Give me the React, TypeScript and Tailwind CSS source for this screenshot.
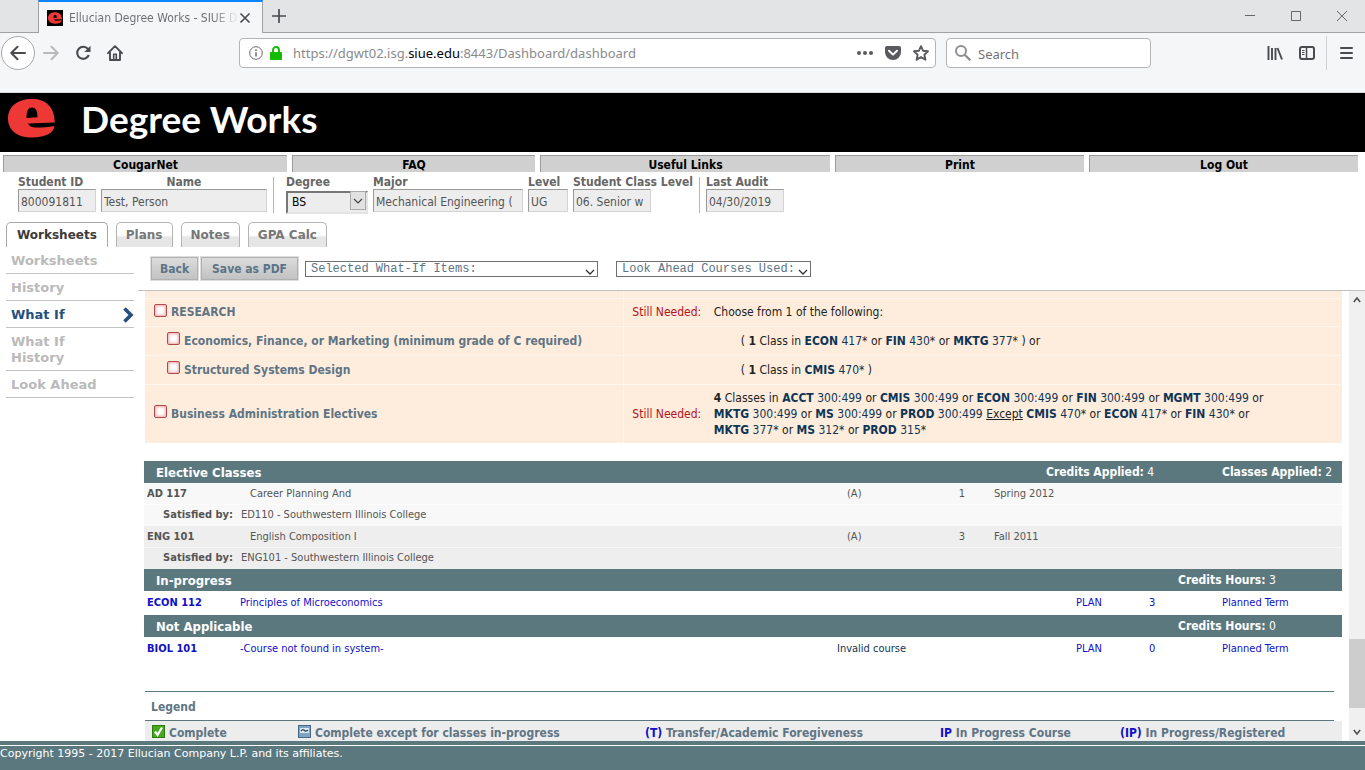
import React from "react";

const COND = "font-['DejaVu_Sans_Condensed','DejaVu_Sans',sans-serif]";
const WIDE = "font-['DejaVu_Sans',sans-serif]";

function LogoMark({ className }: { className: string }) {
  return (
    <svg viewBox="0 0 47 39" className={className} aria-hidden="true">
      <path
        fillRule="evenodd"
        fill="#ee3835"
        d="M24 0C38 0 46.500 8 46.800 23.500L20 24.500C21 27 24 28.600 28 28.600C34 28.600 40 28 46.500 27C46 33.500 38 38.500 24 38.500C9 38.500 0 31 0 19.500C0 8 9 0 24 0ZM18.500 19L29.500 18.300C29.500 12 28 8.500 24 8.500C20 8.500 18.500 12 18.500 19Z"
      />
    </svg>
  );
}

function TabStrip() {
  return (
    <div className="flex h-[33px] shrink-0 items-stretch bg-[#e3e4e6]">
      <div className="w-[38px] border-b border-[#a0a1a3]" />
      <div className="flex w-[225px] items-center border-x border-t-2 border-x-[#a0a1a3] border-t-[#0a84ff] bg-[#f5f6f7] pl-2">
        <span className="flex h-4 w-4 items-center justify-center bg-black">
          <LogoMark className="h-3 w-3.5" />
        </span>
        <span className="ml-1.5 w-[168px] whitespace-nowrap bg-gradient-to-r from-[#6b6b6f] from-85% to-[#e0e0e2] to-98% bg-clip-text text-[12px] text-transparent">
          Ellucian Degree Works - SIUE D
        </span>
        <button aria-label="Close tab" className="ml-0.5 text-[#4a4a4f]">
          <svg viewBox="0 0 12 12" className="h-3 w-3" stroke="currentColor" strokeWidth="1.6">
            <path d="M1.500 1.500 10.500 10.500M10.500 1.500 1.500 10.500" />
          </svg>
        </button>
      </div>
      <div className="flex flex-1 items-center justify-between border-b border-[#a0a1a3] pl-[9px] pr-[18px]">
        <button aria-label="New tab" className="text-[#4a4a4f]">
          <svg viewBox="0 0 14 14" className="h-3.5 w-3.5" stroke="currentColor" strokeWidth="1.700">
            <path d="M7 0V14M0 7H14" />
          </svg>
        </button>
        <div className="flex gap-9 text-[#66676a]">
          <button aria-label="Minimize">
            <svg viewBox="0 0 10 10" className="h-2.5 w-2.5" stroke="currentColor"><path d="M0 4.500H10" /></svg>
          </button>
          <button aria-label="Maximize">
            <svg viewBox="0 0 10 10" className="h-2.5 w-2.5" stroke="currentColor" fill="none"><path d="M.5.5H9.500V9.500H.5Z" /></svg>
          </button>
          <button aria-label="Close window">
            <svg viewBox="0 0 10 10" className="h-2.5 w-2.5" stroke="currentColor"><path d="M0 0 10 10M10 0 0 10" /></svg>
          </button>
        </div>
      </div>
    </div>
  );
}

function Toolbar() {
  return (
    <div className="flex h-[60px] shrink-0 items-start border-b border-[#dcdcde] bg-[#f5f6f7] pt-[3px] text-[#5a5a5e]">
      <div className="flex h-[34px] items-center pl-px">
        <button aria-label="Back" className="flex h-[34px] w-[34px] items-center justify-center rounded-full border border-[#a9a9ac] bg-white">
          <svg viewBox="0 0 16 16" className="h-4 w-4" stroke="#4a4a4f" strokeWidth="2" fill="none" strokeLinecap="round" strokeLinejoin="round">
            <path d="M15 8H1.500M7.500 1.800 1.300 8 7.500 14.200" />
          </svg>
        </button>
        <button aria-label="Forward" className="ml-2">
          <svg viewBox="0 0 16 16" className="h-4 w-4" stroke="#b9b9bc" strokeWidth="2" fill="none" strokeLinecap="round" strokeLinejoin="round">
            <path d="M1 8H14.500M8.500 1.800 14.700 8 8.500 14.200" />
          </svg>
        </button>
        <button aria-label="Reload" className="ml-4">
          <svg viewBox="0 0 16 16" className="h-4 w-4" fill="none" stroke="#4a4a4f" strokeWidth="2.100">
            <path d="M13 4.200A6 6 0 1 0 13.800 10" />
            <path d="M15.500.8V7H9.300Z" fill="#4a4a4f" stroke="none" />
          </svg>
        </button>
        <button aria-label="Home" className="ml-4">
          <svg viewBox="0 0 16 16" className="h-4 w-4" fill="none" stroke="#4a4a4f" strokeWidth="1.900" strokeLinejoin="round" strokeLinecap="round">
            <path d="M1 8.200 8 1.200 15 8.200M3 7.500V15H13V7.500" />
            <path d="M6.700 15V9.300H9.300V15" strokeWidth="1.600" />
          </svg>
        </button>
      </div>
      <div className="ml-[116px] mt-0.5 flex h-[30px] min-w-0 flex-[697] items-center rounded-sm border border-[#b4b4b7] bg-white pl-[9px] pr-1.5">
        <svg viewBox="0 0 14 14" className="h-3.5 w-3.5 shrink-0" fill="none" stroke="#6b6b6f" aria-hidden="true">
          <circle cx="7" cy="7" r="6.300" />
          <path d="M7 6.200V10.500M7 3.300V4.900" strokeWidth="1.500" />
        </svg>
        <svg viewBox="0 0 12 14" className="ml-[7px] h-3.5 w-3 shrink-0" aria-hidden="true">
          <path d="M3 7V4a3 3 0 0 1 6 0V7" fill="none" stroke="#12bc00" strokeWidth="1.900" />
          <rect y="6" width="12" height="8" rx="1" fill="#12bc00" />
        </svg>
        <span className="ml-[11px] flex-1 truncate pt-0.5 font-['Noto_Sans',sans-serif] text-[13px] text-[#8a8a8d]">
          https://dgwt02.isg.<span className="text-black">siue.edu</span>:8443/Dashboard/dashboard
        </span>
        <button aria-label="Page actions">
          <svg viewBox="0 0 16 16" className="h-4 w-4" fill="#5a5a5e"><circle cx="2" cy="8" r="2" /><circle cx="8" cy="8" r="2" /><circle cx="14" cy="8" r="2" /></svg>
        </button>
        <button aria-label="Save to Pocket" className="ml-3">
          <svg viewBox="0 0 16 16" className="h-4 w-4">
            <path d="M2 1H14A2 2 0 0 1 16 3V7A8 8 0 0 1 0 7V3A2 2 0 0 1 2 1Z" fill="#5a5a5e" />
            <path d="M4 5.800 8 9.600 12 5.800" fill="none" stroke="#fff" strokeWidth="2" strokeLinecap="round" strokeLinejoin="round" />
          </svg>
        </button>
        <button aria-label="Bookmark" className="ml-3">
          <svg viewBox="0 0 16 16" className="h-4 w-4" fill="none" stroke="#5a5a5e" strokeWidth="1.900" strokeLinejoin="round">
            <path d="M8 1.200 10 5.700 15 6.300 11.400 9.700 12.400 14.700 8 12.200 3.600 14.700 4.600 9.700 1 6.300 6 5.700Z" />
          </svg>
        </button>
      </div>
      <label className="ml-2.5 mt-0.5 flex h-[30px] w-[205px] shrink-0 items-center rounded-sm border border-[#b4b4b7] bg-white pl-2">
        <svg viewBox="0 0 16 16" className="h-4 w-4 shrink-0" fill="none" stroke="#8f8f92" strokeWidth="2" aria-hidden="true">
          <circle cx="6" cy="6" r="5" />
          <path d="M9.700 9.700 15.300 15.300" strokeWidth="2.300" />
        </svg>
        <input aria-label="Search" placeholder="Search" className="ml-[7px] h-7 w-full min-w-0 bg-transparent pt-0.5 font-['Noto_Sans',sans-serif] text-[13px] outline-none placeholder:text-[#737376]" />
      </label>
      <div className="ml-[116px] flex h-[34px] shrink-0 items-center pr-3">
        <button aria-label="Library">
          <svg viewBox="0 0 16 16" className="h-4 w-4" stroke="#4a4a4f" strokeWidth="1.900"><path d="M1.500 1V15M5 3V15M8.500 3V15M10.500 3 15 14.500" /></svg>
        </button>
        <button aria-label="Sidebars" className="ml-4">
          <svg viewBox="0 0 16 16" className="h-4 w-4" fill="none" stroke="#4a4a4f">
            <rect x="1" y="2" width="14" height="12" rx="2" strokeWidth="2" />
            <path d="M7.500 2V14" strokeWidth="1.500" />
            <path d="M3 5.500H5.500M3 7.500H5.500M3 9.500H5.500" />
          </svg>
        </button>
        <span className="ml-[11px] h-[34px] w-px bg-[#d0d0d3]" />
        <button aria-label="Menu" className="ml-[13px]">
          <svg viewBox="0 0 13 16" className="h-4 w-[13px]" stroke="#4a4a4f" strokeWidth="2" strokeLinecap="round"><path d="M1 3H12M1 8H12M1 13H12" /></svg>
        </button>
      </div>
    </div>
  );
}

function NavBar() {
  const cell = "h-[17px] border-l border-t border-[#9b9b9b] bg-[#d0d0d0] text-center text-[12px] font-bold leading-[18px] text-black";
  return (
    <nav className="grid shrink-0 grid-cols-[284fr_243fr_290fr_249fr_269fr] gap-[5px] pl-[3px] pr-[7px] pt-[3px]">
      <a href="#cougarnet" className={cell}>CougarNet</a>
      <a href="#faq" className={cell}>FAQ</a>
      <a href="#links" className={cell}>Useful Links</a>
      <a href="#print" className={cell}>Print</a>
      <a href="#logout" className={cell}>Log Out</a>
    </nav>
  );
}

function Field({ id, label, value, size, center }: { id: string; label: string; value: string; size: string; center?: boolean }) {
  return (
    <div className="flex flex-col">
      <label htmlFor={id} className={`h-3.5 whitespace-nowrap text-[12px] font-bold leading-[14px] text-[#666] ${center ? "text-center" : ""}`}>{label}</label>
      <input id={id} readOnly value={value} className={`h-[23px] ${size} border border-[#d4d4d4] border-l-[#999] border-t-[#999] bg-[#ededed] pl-0.5 pt-0.5 text-[12px] text-[#555] outline-none`} />
    </div>
  );
}

function StudentBar() {
  return (
    <form className="flex h-[50px] shrink-0 items-start gap-[5px] pl-[18px] pt-[3px]">
      <Field id="sid" label="Student ID" value="800091811" size="w-[78px]" />
      <Field id="name" label="Name" value="Test, Person" size="w-[166px]" center />
      <div className="ml-px mr-[7px] mt-0.5 h-9 w-px bg-[#b5b5b5]" />
      <div className="flex flex-col">
        <label htmlFor="degree" className="h-3.5 text-[12px] font-bold leading-[14px] text-[#666]">Degree</label>
        <div className="relative">
          <select id="degree" className="h-[23px] w-[82px] appearance-none border-2 border-[#e4e4e4] border-l-[#777] border-t-[#777] bg-[#ededed] pl-1 text-[12px] text-black outline-none">
            <option>BS</option>
          </select>
          <span className="pointer-events-none absolute right-0.5 top-0.5 flex h-[19px] w-4 items-center justify-center border border-[#aaa] bg-[#e1e1e1]">
            <svg viewBox="0 0 10 6" className="h-1.5 w-2.5" fill="none" stroke="#444" strokeWidth="1.200"><path d="M1 1 5 5 9 1" /></svg>
          </span>
        </div>
      </div>
      <Field id="major" label="Major" value="Mechanical Engineering (" size="w-[150px]" />
      <Field id="level" label="Level" value="UG" size="w-10" />
      <div className="w-[121px]">
        <Field id="class" label="Student Class Level" value="06. Senior w" size="w-[78px]" />
      </div>
      <div className="mr-px mt-0.5 h-9 w-px bg-[#b5b5b5]" />
      <Field id="audit" label="Last Audit" value="04/30/2019" size="w-[78px]" />
    </form>
  );
}

function MainTabs() {
  const off = "rounded-t-[5px] border border-b-0 border-[#b4b4b4] bg-gradient-to-b from-white from-50% to-[#e6e6e6] to-60% px-[9px] text-[#777]";
  return (
    <div className={`flex h-[25px] shrink-0 items-stretch gap-2 pl-1.5 text-[12px] font-bold ${WIDE}`}>
      <button className="rounded-t-[5px] border border-b-0 border-[#a8a8a8] bg-white px-2.5 text-[#3a3a3a]">Worksheets</button>
      <button className={off}>Plans</button>
      <button className={off}>Notes</button>
      <button className={off}>GPA Calc</button>
    </div>
  );
}

function Sidebar() {
  const item = "block border-b border-[#c4c4c4] pb-1 pt-1.5 pl-[5px] pr-8 leading-4";
  return (
    <nav className={`ml-1.5 w-32 shrink-0 text-[13px] font-bold text-[#bababa] ${WIDE}`}>
      <a href="#worksheets" className={item}>Worksheets</a>
      <a href="#history" className={item}>History</a>
      <a href="#whatif" className="flex items-center justify-between border-b border-[#c4c4c4] pb-1 pt-1.5 pl-[5px] leading-4 text-[#26507f]">
        What If
        <svg viewBox="0 0 11 16" className="h-4 w-[11px]" fill="none" stroke="#26507f" strokeWidth="3.600"><path d="M1.500 1.500 8 8 1.500 14.500" /></svg>
      </a>
      <a href="#whatifhistory" className={item}>What If History</a>
      <a href="#lookahead" className={item}>Look Ahead</a>
    </nav>
  );
}

function ListSelect({ label, size }: { label: string; size: string }) {
  return (
    <div className="relative flex">
      <select aria-label={label} className={`h-4 ${size} appearance-none border border-[#707070] bg-white pl-[5px] font-['Liberation_Mono',monospace] text-[12px] leading-[14px] text-[#5b7486] outline-none`}>
        <option>{label}</option>
      </select>
      <svg viewBox="0 0 10 6" className="pointer-events-none absolute bottom-0.5 right-[3px] h-1.5 w-2.5" fill="none" stroke="#333" strokeWidth="1.300"><path d="M1 1 5 5 9 1" /></svg>
    </div>
  );
}

function Actions() {
  const btn = "h-[23px] border border-[#b0b0b0] bg-gradient-to-b from-[#dcdcdc] to-[#c2c2c2] text-[12px] font-bold text-[#5b7486] outline outline-1 outline-[#dedede]";
  return (
    <div className="flex h-11 shrink-0 items-center border-b border-[#c0c0c0] pl-[13px]">
      <button className={`px-2 ${btn}`}>Back</button>
      <button className={`ml-[3px] px-2.5 ${btn}`}>Save as PDF</button>
      <div className="ml-[7px] flex gap-[18px]">
        <ListSelect label="Selected What-If Items:" size="w-[293px]" />
        <ListSelect label="Look Ahead Courses Used:" size="w-[195px]" />
      </div>
    </div>
  );
}

function C({ d, n, star }: { d: string; n: string; star?: boolean }) {
  return (
    <span className="text-[#0f3556]"><b>{d}</b> {n}{star && <span className="text-[#222]">*</span>}</span>
  );
}

function Requirement({ id, label, indent }: { id: string; label: string; indent?: boolean }) {
  return (
    <div className={`flex items-center gap-1 ${indent ? "pl-[22px]" : "pl-[9px]"}`}>
      <input id={id} type="checkbox" className="mb-1 h-[13px] w-[13px] shrink-0 appearance-none rounded-xs border border-[#b04a4a] bg-white shadow-[inset_0_0_3px_1px_#f0a8a8]" />
      <label htmlFor={id} className="whitespace-nowrap text-[12px] font-bold text-[#5f7585]">{label}</label>
    </div>
  );
}

function Requirements() {
  const row = "border-b border-[#fff7ef]";
  const left = "w-[40%] border-r border-[#fff7ef] p-0";
  const still = "w-[90px] p-0 pl-2 text-[#b5121b]";
  return (
    <table className="w-full table-fixed border-collapse bg-[#feeddd] text-[12px] leading-4 text-[#222]">
      <tbody>
        <tr className={`h-[7px] ${row}`}><td className={left} /><td className={still} /><td /></tr>
        <tr className={`h-7 ${row}`}>
          <td className={left}><Requirement id="r1" label="RESEARCH" /></td>
          <td className={still}>Still Needed:</td>
          <td>Choose from 1 of the following:</td>
        </tr>
        <tr className={`h-[29px] ${row}`}>
          <td className={left}><Requirement id="r2" label="Economics, Finance, or Marketing (minimum grade of C required)" indent /></td>
          <td className={still} />
          <td className="pl-[27px]">( <b>1</b> Class in <C d="ECON" n="417" star /> or <C d="FIN" n="430" star /> or <C d="MKTG" n="377" star /> ) or</td>
        </tr>
        <tr className={`h-[29px] ${row}`}>
          <td className={left}><Requirement id="r3" label="Structured Systems Design" indent /></td>
          <td className={still} />
          <td className="pl-[27px]">( <b>1</b> Class in <C d="CMIS" n="470" star /> )</td>
        </tr>
        <tr className="h-[59px]">
          <td className={left}><Requirement id="r4" label="Business Administration Electives" /></td>
          <td className={still}>Still Needed:</td>
          <td className="whitespace-nowrap">
            <b>4</b> Classes in <C d="ACCT" n="300:499" /> or <C d="CMIS" n="300:499" /> or <C d="ECON" n="300:499" /> or <C d="FIN" n="300:499" /> or <C d="MGMT" n="300:499" /> or<br />
            <C d="MKTG" n="300:499" /> or <C d="MS" n="300:499" /> or <C d="PROD" n="300:499" /> <u>Except</u> <C d="CMIS" n="470" star /> or <C d="ECON" n="417" star /> or <C d="FIN" n="430" star /> or<br />
            <C d="MKTG" n="377" star /> or <C d="MS" n="312" star /> or <C d="PROD" n="315" star />
          </td>
        </tr>
      </tbody>
    </table>
  );
}

function Band({ title, children }: { title: string; children: React.ReactNode }) {
  return (
    <div className="flex h-[22px] items-center bg-[#5c787f] pl-3 text-[12px] text-white">
      <h2 className="flex-1 pt-0.5 text-[13px] font-bold">{title}</h2>
      {children}
    </div>
  );
}

function Electives() {
  const rows = [
    { code: "AD 117", title: "Career Planning And", credit: "1", term: "Spring 2012", by: "ED110 - Southwestern Illinois College", bg: "bg-[#f8f8f8]" },
    { code: "ENG 101", title: "English Composition I", credit: "3", term: "Fall 2011", by: "ENG101 - Southwestern Illinois College", bg: "bg-[#eeeeee]" },
  ];
  return (
    <table className="w-full table-fixed border-collapse text-[11px] text-[#555]">
      <colgroup>
        <col className="w-[89px]" /><col className="w-[17px]" /><col /><col className="w-[90px]" /><col className="w-[28px]" /><col className="w-[377px]" />
      </colgroup>
      {rows.map((r) => (
        <tbody key={r.code} className={r.bg}>
          <tr className="h-[21px]">
            <td className="pl-[3px] pt-0.5 font-bold">{r.code}</td>
            <td />
            <td className="pt-0.5">{r.title}</td>
            <td className="pt-0.5">(A)</td>
            <td className="pt-0.5 text-right">{r.credit}</td>
            <td className="pl-[29px] pt-0.5">{r.term}</td>
          </tr>
          <tr className="h-[22px] border-t border-white/50">
            <td className="whitespace-nowrap text-right font-bold">Satisfied by:</td>
            <td colSpan={5} className="pl-2">{r.by}</td>
          </tr>
        </tbody>
      ))}
    </table>
  );
}

function PlannedRow({ code, title, note, credit }: { code: string; title: string; note: string; credit: string }) {
  return (
    <table className="w-full table-fixed border-collapse text-[11px] text-[#1010c8]">
      <colgroup>
        <col className="w-24" /><col /><col className="w-[239px]" /><col className="w-[73px]" /><col className="w-[73px]" /><col className="w-[120px]" />
      </colgroup>
      <tbody>
        <tr className="h-6">
          <td className="pl-[3px] font-bold">{code}</td>
          <td>{title}</td>
          <td className="text-[#0f3556]">{note}</td>
          <td>PLAN</td>
          <td>{credit}</td>
          <td>Planned Term</td>
        </tr>
      </tbody>
    </table>
  );
}

function Legend() {
  return (
    <section className="ml-px mt-[30px] text-[12px] font-bold text-[#5f7585]">
      <h2 className="mr-2 h-[30px] border-y border-[#5c787f] pl-1.5 leading-[30px]">Legend</h2>
      <div className="grid h-[29px] grid-cols-[153fr_347fr_295fr_180fr_222fr] items-start whitespace-nowrap bg-[#ededed] pt-[3px]">
        <span className="flex items-center gap-1 pl-[7px]">
          <svg viewBox="0 0 13 13" className="mb-1 h-[13px] w-[13px]" aria-hidden="true">
            <rect x=".5" y=".5" width="12" height="12" fill="#45a81d" stroke="#2d7d12" />
            <path d="M3 6.500 5.500 10 10 2.500" fill="none" stroke="#fff" strokeWidth="2.200" />
          </svg>
          Complete
        </span>
        <span className="flex items-center gap-1">
          <svg viewBox="0 0 13 13" className="mb-1 h-[13px] w-[13px]" aria-hidden="true">
            <rect x=".5" y=".5" width="12" height="12" fill="#7fa3c0" stroke="#45688a" />
            <rect x="2" y="3" width="9" height="5" fill="#dfeaf3" />
            <path d="M3 6C4.500 4 5.500 4.500 6.500 5.500S8.500 6.500 10 5" fill="none" stroke="#24486a" strokeWidth="1.300" />
          </svg>
          Complete except for classes in-progress
        </span>
        <span><span className="text-[#1010c8]">(T)</span> Transfer/Academic Foregiveness</span>
        <span><span className="text-[#1010c8]">IP</span> In Progress Course</span>
        <span><span className="text-[#1010c8]">(IP)</span> In Progress/Registered</span>
      </div>
    </section>
  );
}

function ScrollBar() {
  return (
    <div className="flex w-4 shrink-0 flex-col items-center bg-[#f0f0f0] py-[5px]">
      <svg viewBox="0 0 8 8" className="h-2 w-2" fill="none" stroke="#505050" strokeWidth="1.600"><path d="M.8 6 4 2 7.200 6" /></svg>
      <div className="flex-[334]" />
      <div className="w-full flex-[69] bg-[#cdcdcd]" />
      <div className="flex-[20]" />
      <svg viewBox="0 0 8 8" className="h-2 w-2" fill="none" stroke="#505050" strokeWidth="1.600"><path d="M.8 2 4 6 7.200 2" /></svg>
    </div>
  );
}

export default function App() {
  return (
    <div className={`flex h-screen flex-col overflow-hidden bg-white ${COND}`}>
      <TabStrip />
      <Toolbar />
      <header className="flex h-[59px] shrink-0 items-center bg-black pl-2">
        <LogoMark className="mb-2 h-[39px] w-[47px]" />
        <h1 className="mb-2 ml-[26px] font-['Lato',sans-serif] text-[37px] font-bold leading-none text-white">Degree Works</h1>
      </header>
      <NavBar />
      <StudentBar />
      <MainTabs />
      <div className="flex min-h-0 flex-1">
        <Sidebar />
        <main className="ml-1 flex min-w-0 flex-1 flex-col">
          <Actions />
          <div className="flex min-h-0 flex-1">
            <div className="min-w-0 flex-1 overflow-hidden pl-1.5 pr-[7px]">
              <div className="pl-px">
                <Requirements />
              </div>
              <div className="mt-[18px]">
                <Band title="Elective Classes">
                  <span className="w-44"><b>Credits Applied:</b> 4</span>
                  <span className="w-[120px]"><b>Classes Applied:</b> 2</span>
                </Band>
                <Electives />
                <Band title="In-progress">
                  <span className="w-[164px]"><b>Credits Hours:</b> 3</span>
                </Band>
                <PlannedRow code="ECON 112" title="Principles of Microeconomics" note="" credit="3" />
                <Band title="Not Applicable">
                  <span className="w-[164px]"><b>Credits Hours:</b> 0</span>
                </Band>
                <PlannedRow code="BIOL 101" title="-Course not found in system-" note="Invalid course" credit="0" />
              </div>
              <Legend />
            </div>
            <ScrollBar />
          </div>
        </main>
      </div>
      <footer className="shrink-0 border-t-4 border-[#5c787f] bg-white pt-px text-[11px] text-white">
        <p className={`h-6 bg-[#5c787f] leading-4 ${WIDE}`}>Copyright 1995 - 2017 Ellucian Company L.P. and its affiliates.</p>
      </footer>
    </div>
  );
}
